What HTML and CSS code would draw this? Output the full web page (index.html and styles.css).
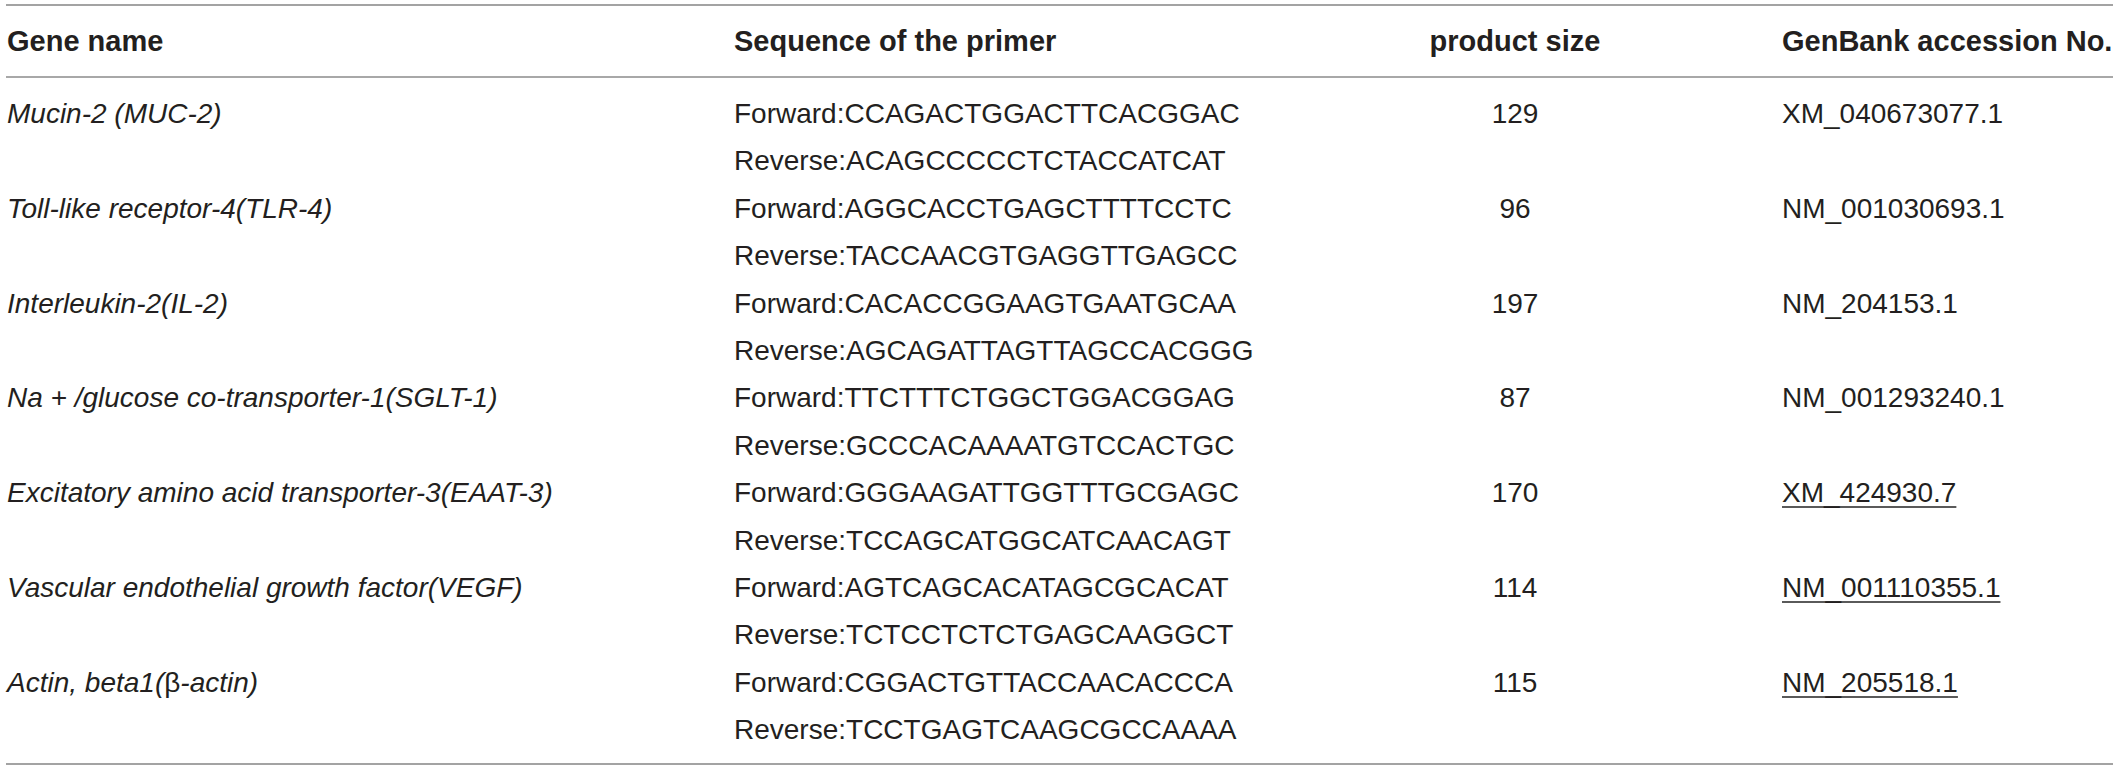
FILE: index.html
```html
<!DOCTYPE html>
<html lang="en">
<head>
<meta charset="utf-8">
<title>Primer sequences</title>
<link rel="stylesheet" href="styles.css">
</head>
<body>
<div class="wrap">
<table class="primers">
<colgroup>
<col class="col-gene">
<col class="col-seq">
<col class="col-size">
<col class="col-acc">
</colgroup>
<thead>
<tr>
<th class="h-gene">Gene name</th>
<th class="h-seq">Sequence of the primer</th>
<th class="h-size">product size</th>
<th class="h-acc">GenBank accession No.</th>
</tr>
</thead>
<tbody>
<tr>
<td class="gene">Mucin-2 (MUC-2)</td>
<td class="seq"><div>Forward:CCAGACTGGACTTCACGGAC</div><div>Reverse:ACAGCCCCCTCTACCATCAT</div></td>
<td class="size">129</td>
<td class="acc">XM_040673077.1</td>
</tr>
<tr>
<td class="gene">Toll-like receptor-4(TLR-4)</td>
<td class="seq"><div>Forward:AGGCACCTGAGCTTTTCCTC</div><div>Reverse:TACCAACGTGAGGTTGAGCC</div></td>
<td class="size">96</td>
<td class="acc">NM_001030693.1</td>
</tr>
<tr>
<td class="gene">Interleukin-2(IL-2)</td>
<td class="seq"><div>Forward:CACACCGGAAGTGAATGCAA</div><div>Reverse:AGCAGATTAGTTAGCCACGGG</div></td>
<td class="size">197</td>
<td class="acc">NM_204153.1</td>
</tr>
<tr>
<td class="gene">Na + /glucose co-transporter-1(SGLT-1)</td>
<td class="seq"><div>Forward:TTCTTTCTGGCTGGACGGAG</div><div>Reverse:GCCCACAAAATGTCCACTGC</div></td>
<td class="size">87</td>
<td class="acc">NM_001293240.1</td>
</tr>
<tr>
<td class="gene">Excitatory amino acid transporter-3(EAAT-3)</td>
<td class="seq"><div>Forward:GGGAAGATTGGTTTGCGAGC</div><div>Reverse:TCCAGCATGGCATCAACAGT</div></td>
<td class="size">170</td>
<td class="acc"><a class="link" href="#">XM_424930.7</a></td>
</tr>
<tr>
<td class="gene">Vascular endothelial growth factor(VEGF)</td>
<td class="seq"><div>Forward:AGTCAGCACATAGCGCACAT</div><div>Reverse:TCTCCTCTCTGAGCAAGGCT</div></td>
<td class="size">114</td>
<td class="acc"><a class="link" href="#">NM_001110355.1</a></td>
</tr>
<tr>
<td class="gene">Actin, beta1(<span class="greek">β</span>-actin)</td>
<td class="seq"><div>Forward:CGGACTGTTACCAACACCCA</div><div>Reverse:TCCTGAGTCAAGCGCCAAAA</div></td>
<td class="size">115</td>
<td class="acc"><a class="link" href="#">NM_205518.1</a></td>
</tr>
</tbody>
</table>
</div>
</body>
</html>
```
FILE: styles.css
```css
html, body {
  margin: 0;
  padding: 0;
  background: #ffffff;
}

body {
  font-family: "Liberation Sans", Arial, sans-serif;
  color: #231f20;
}

.wrap {
  padding: 4px 0 0 6px;
}

.primers {
  border-collapse: separate;
  border-spacing: 0;
  table-layout: fixed;
  width: 2107px;
  border-top: 2px solid #a3a3a3;
  border-bottom: 2px solid #a3a3a3;
}

.col-gene { width: 728px; }
.col-seq { width: 514px; }
.col-size { width: 534px; }
.col-acc { width: 331px; }

.primers th {
  height: 70px;
  padding: 0;
  font-size: 29px;
  font-weight: bold;
  text-align: left;
  vertical-align: middle;
  white-space: nowrap;
  border-bottom: 2px solid #a8a8a8;
}

.primers th.h-gene { padding-left: 1px; }
.primers th.h-size { text-align: center; }

.primers td {
  padding: 0;
  font-size: 28px;
  line-height: 47.4px;
  vertical-align: top;
  white-space: nowrap;
}

.primers tbody tr:first-child td { padding-top: 12px; }
.primers tbody tr:last-child td { padding-bottom: 9px; }

.gene {
  font-style: italic;
  padding-left: 1px !important;
}

.greek { font-style: normal; }

.size { text-align: center; }

.link {
  color: #231f20;
  text-decoration: underline;
  text-decoration-thickness: 2px;
  text-decoration-color: #5a5a5a;
  text-underline-offset: 4px;
}
```
